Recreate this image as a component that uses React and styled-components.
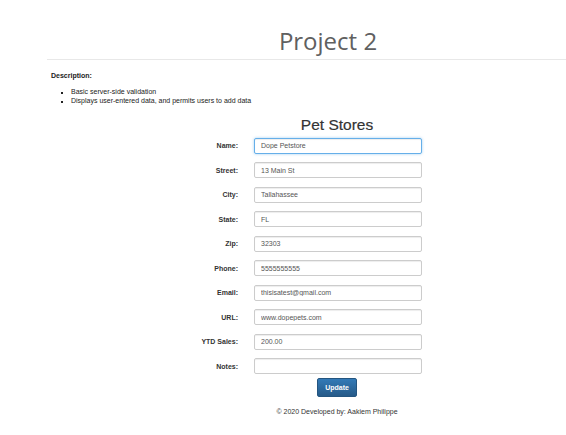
import React from "react";
import styled, { createGlobalStyle } from "styled-components";

const Global = createGlobalStyle`
  html, body { margin: 0; padding: 0; background: #fff; overflow: hidden; }
  body { font-family: "Liberation Sans", Arial, sans-serif; color: #333; }
`;

const Header = styled.header`
  margin-left: 47px;
  padding: 28px 0 5px 43px;
  border-bottom: 1px solid #e8e8e8;
`;

const Title = styled.h1`
  margin: 0;
  text-align: center;
  font-family: "Open Sans", "DejaVu Sans", sans-serif;
  font-weight: 400;
  font-size: 24px;
  line-height: 26px;
  color: #606060;
`;

const Content = styled.main`
  margin-left: 47px;
`;

const Description = styled.section`
  padding: 10.5px 0 0 4px;
  font-size: 7px;
  line-height: 9.5px;
  color: #222;
`;

const DescLabel = styled.div`
  font-weight: 700;
`;

const Bullets = styled.ul`
  margin: 6.5px 0 0;
  padding-left: 20px;
  list-style: square;
  li::marker { font-size: 5px; }
`;

const Centered = styled.div`
  padding-left: 61px;
`;

const Heading = styled.h2`
  margin: 10px 0 0;
  padding-left: 61px;
  text-align: center;
  font-size: 15.5px;
  line-height: 18px;
  font-weight: 400;
  color: #333;
  -webkit-text-stroke: 0.2px #333;
`;

const Form = styled.form`
  margin: 4.3px 0 0 131px;
  display: grid;
  grid-template-columns: 60px 168px;
  column-gap: 16px;
  row-gap: 8.5px;
  align-items: center;
`;

const Label = styled.label`
  text-align: right;
  font-size: 7px;
  font-weight: 700;
  color: #333;
`;

const Input = styled.input`
  box-sizing: border-box;
  height: 16px;
  width: 100%;
  margin: 0;
  padding: 0 6px;
  font-family: "Liberation Sans", Arial, sans-serif;
  font-size: 7px;
  color: #555;
  background: #fff;
  border: 1px solid ${(p) => (p.$focused ? "#66afe9" : "#ccc")};
  border-radius: 2px;
  box-shadow: ${(p) =>
    p.$focused
      ? "inset 0 1px 1px rgba(0,0,0,.075), 0 0 3px rgba(102,175,233,.6)"
      : "inset 0 1px 1px rgba(0,0,0,.075)"};
  outline: none;
`;

const ButtonRow = styled.div`
  display: flex;
  justify-content: center;
  margin-top: 3.5px;
`;

const Button = styled.button`
  box-sizing: border-box;
  width: 40px;
  height: 19px;
  padding: 0;
  font-family: "Liberation Sans", Arial, sans-serif;
  font-size: 7px;
  font-weight: 700;
  color: #fff;
  background: linear-gradient(#337ab7, #265a88);
  border: 1px solid #245580;
  border-radius: 2px;
`;

const Footer = styled.footer`
  margin-top: 10px;
  text-align: center;
  font-size: 7px;
  line-height: 9.5px;
  color: #333;
`;

const fields = [
  ["Name:", "Dope Petstore"],
  ["Street:", "13 Main St"],
  ["City:", "Tallahassee"],
  ["State:", "FL"],
  ["Zip:", "32303"],
  ["Phone:", "5555555555"],
  ["Email:", "thisisatest@gmail.com"],
  ["URL:", "www.dopepets.com"],
  ["YTD Sales:", "200.00"],
  ["Notes:", ""],
];

export default function App() {
  return (
    <>
      <Global />
      <Header>
        <Title>Project 2</Title>
      </Header>
      <Content>
        <Description>
          <DescLabel>Description:</DescLabel>
          <Bullets>
            <li>Basic server-side validation</li>
            <li>Displays user-entered data, and permits users to add data</li>
          </Bullets>
        </Description>
        <Heading>Pet Stores</Heading>
        <Form onSubmit={(e) => e.preventDefault()}>
          {fields.map(([label, value], i) => (
            <React.Fragment key={label}>
              <Label htmlFor={`f${i}`}>{label}</Label>
              <Input id={`f${i}`} defaultValue={value} $focused={i === 0} />
            </React.Fragment>
          ))}
        </Form>
        <Centered>
          <ButtonRow>
            <Button type="button">Update</Button>
          </ButtonRow>
          <Footer>© 2020 Developed by: Aakiem Philippe</Footer>
        </Centered>
      </Content>
    </>
  );
}
